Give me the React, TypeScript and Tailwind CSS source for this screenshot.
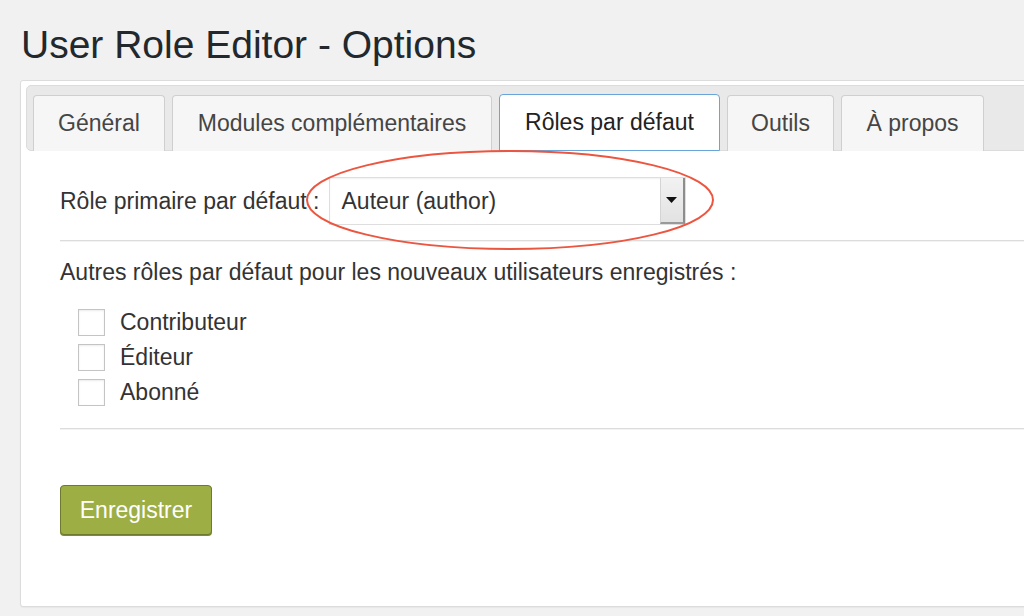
const tabs = [
  { label: 'Général', width: 'w-[132px]' },
  { label: 'Modules complémentaires', width: 'w-[320px]' },
  { label: 'Rôles par défaut', width: 'w-[221px]', active: true },
  { label: 'Outils', width: 'w-[107px]' },
  { label: 'À propos', width: 'w-[143px]' },
];

const otherRoles = ['Contributeur', 'Éditeur', 'Abonné'];

export default function App() {
  return (
    <div className="relative w-[1024px] h-[616px] overflow-hidden bg-[#f1f1f1] font-['Liberation_Sans',Arial,sans-serif] text-[#333]">
      {/* Page title */}
      <h1 className="pl-[21px] pt-[25px] text-[39px] leading-[40px] font-normal text-[#23282d]">
        User Role Editor - Options
      </h1>

      {/* Options panel */}
      <div className="ml-[20px] mt-[15px] w-[1040px] h-[527px] bg-white border border-[#dcdcdc] rounded-[3px] pt-[4px] px-[5px] shadow-[0_1px_1px_rgba(0,0,0,0.04)]">
        {/* Tab bar */}
        <div className="flex items-end gap-[7px] h-[66px] pl-[6px] bg-[#e9e9e9] border border-[#dcdcdc] rounded-[5px]">
          {tabs.map((tab) =>
            tab.active ? (
              <div
                key={tab.label}
                className={`${tab.width} h-[57px] -mb-px flex items-center justify-center bg-white border border-[#6aa5da] rounded-t-[4px] text-[23px] text-[#222]`}
              >
                {tab.label}
              </div>
            ) : (
              <div
                key={tab.label}
                className={`${tab.width} h-[56px] -mb-px flex items-center justify-center bg-[#f6f6f6] border border-b-0 border-[#cfcfcf] rounded-t-[4px] text-[23px] text-[#454545]`}
              >
                {tab.label}
              </div>
            )
          )}
        </div>

        {/* Tab content */}
        <div className="pl-[34px] text-[23px]">
          <div className="flex items-center mt-[26px] h-[48px]">
            <span className="leading-[28px] text-[#333]">Rôle primaire par défaut :</span>
            <div className="ml-[9px] w-[357px] h-[48px] flex border border-[#dedede] shadow-[inset_0_1px_2px_rgba(0,0,0,0.06)] bg-white">
              <div className="flex-1 flex items-center pl-[12px] text-[#333]">Auteur (author)</div>
              <div className="w-[25px] h-full flex items-center justify-center bg-gradient-to-b from-[#f2f2f2] to-[#e2e2e2] border-l border-[#d4d4d4] border-r-2 border-r-[#8d8d8d] border-b-2 border-b-[#9a9a9a]">
                <svg width="11" height="6" viewBox="0 0 11 6">
                  <path d="M0 0 H11 L5.5 6 Z" fill="#111" />
                </svg>
              </div>
            </div>
          </div>

          <div className="mt-[15px] border-t border-[#dcdcdc] h-[2px] bg-[#f3f3f3]" />

          <p className="mt-[16px] leading-[28px] text-[#333]">
            Autres rôles par défaut pour les nouveaux utilisateurs enregistrés :
          </p>

          <div className="mt-[19px] pl-[18px]">
            {otherRoles.map((role) => (
              <div key={role} className="flex items-center h-[35px]">
                <span className="w-[27px] h-[27px] border border-[#c4c4c4] bg-white shadow-[inset_0_1px_2px_rgba(0,0,0,0.08)]" />
                <span className="ml-[15px] text-[#333]">{role}</span>
              </div>
            ))}
          </div>

          <div className="mt-[18px] border-t border-[#dcdcdc] h-[2px] bg-[#f3f3f3]" />

          <button className="mt-[55px] w-[152px] h-[50px] flex items-center justify-center bg-[#9dae45] border border-[#6d7a30] rounded-[4px] text-white text-[23px] shadow-[0_1px_0_#7c8a36]">
            Enregistrer
          </button>
        </div>
      </div>

      {/* Red annotation ellipse */}
      <svg className="absolute left-0 top-0 pointer-events-none" width="1024" height="616">
        <ellipse cx="510" cy="200" rx="203" ry="49" fill="none" stroke="#ec5640" strokeWidth="2" />
      </svg>
    </div>
  );
}
